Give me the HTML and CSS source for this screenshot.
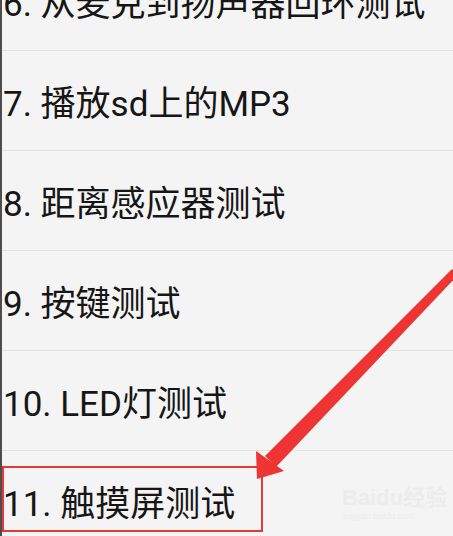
FILE: index.html
```html
<!DOCTYPE html>
<html lang="zh">
<head>
<meta charset="utf-8">
<link rel="stylesheet" href="styles.css">
</head>
<body>
<div class="screen">
  <ul class="list">
    <li class="row">6. 从麦克到扬声器回环测试</li>
    <li class="row">7. 播放sd上的MP3</li>
    <li class="row">8. 距离感应器测试</li>
    <li class="row">9. 按键测试</li>
    <li class="row">10. LED灯测试</li>
    <li class="row">11. 触摸屏测试</li>
  </ul>
  <div class="mark-box"></div>
  <svg class="arrow" width="453" height="536" viewBox="0 0 453 536">
    <polygon points="450,269 456,275 274,467 263,456" fill="#ef3434"/>
    <polygon points="254,451 282,471 255,479" fill="#ef3434"/>
  </svg>
  <div class="watermark">
    <span class="wm-logo">Bai<span class="wm-du">du</span>经验</span>
    <span class="wm-url">jingyan.baidu.com</span>
  </div>
</div>
</body>
</html>
```
FILE: styles.css
```css
html, body {
  margin: 0;
  padding: 0;
  background: #f3f3f3;
  overflow: hidden;
}
.screen {
  position: relative;
  width: 453px;
  height: 536px;
  overflow: hidden;
  box-sizing: border-box;
  border-left: 2px solid #4d4d4d;
  background: #f4f4f4;
}
.list {
  list-style: none;
  margin: -49px 0 0 0;
  padding: 0;
}
.row {
  height: 99px;
  border-bottom: 1px solid #e2e2e2;
  display: flex;
  align-items: center;
  padding-left: 1px;
  font-family: Roboto, "Noto Sans CJK SC", sans-serif;
  font-size: 35px;
  color: #161616;
  white-space: nowrap;
}
.mark-box {
  position: absolute;
  left: 0;
  top: 466px;
  width: 261px;
  height: 66px;
  box-sizing: border-box;
  border: 2px solid #e3393b;
}
.arrow {
  position: absolute;
  left: 0;
  top: 0;
}
.watermark {
  position: absolute;
  left: 340px;
  top: 486px;
  display: flex;
  flex-direction: column;
  align-items: flex-start;
  color: #ececec;
  font-family: "Liberation Sans", "Noto Sans CJK SC", sans-serif;
}
.wm-logo {
  font-size: 22px;
  font-weight: bold;
  line-height: 24px;
}
.wm-url {
  font-size: 9px;
  line-height: 12px;
}
```
